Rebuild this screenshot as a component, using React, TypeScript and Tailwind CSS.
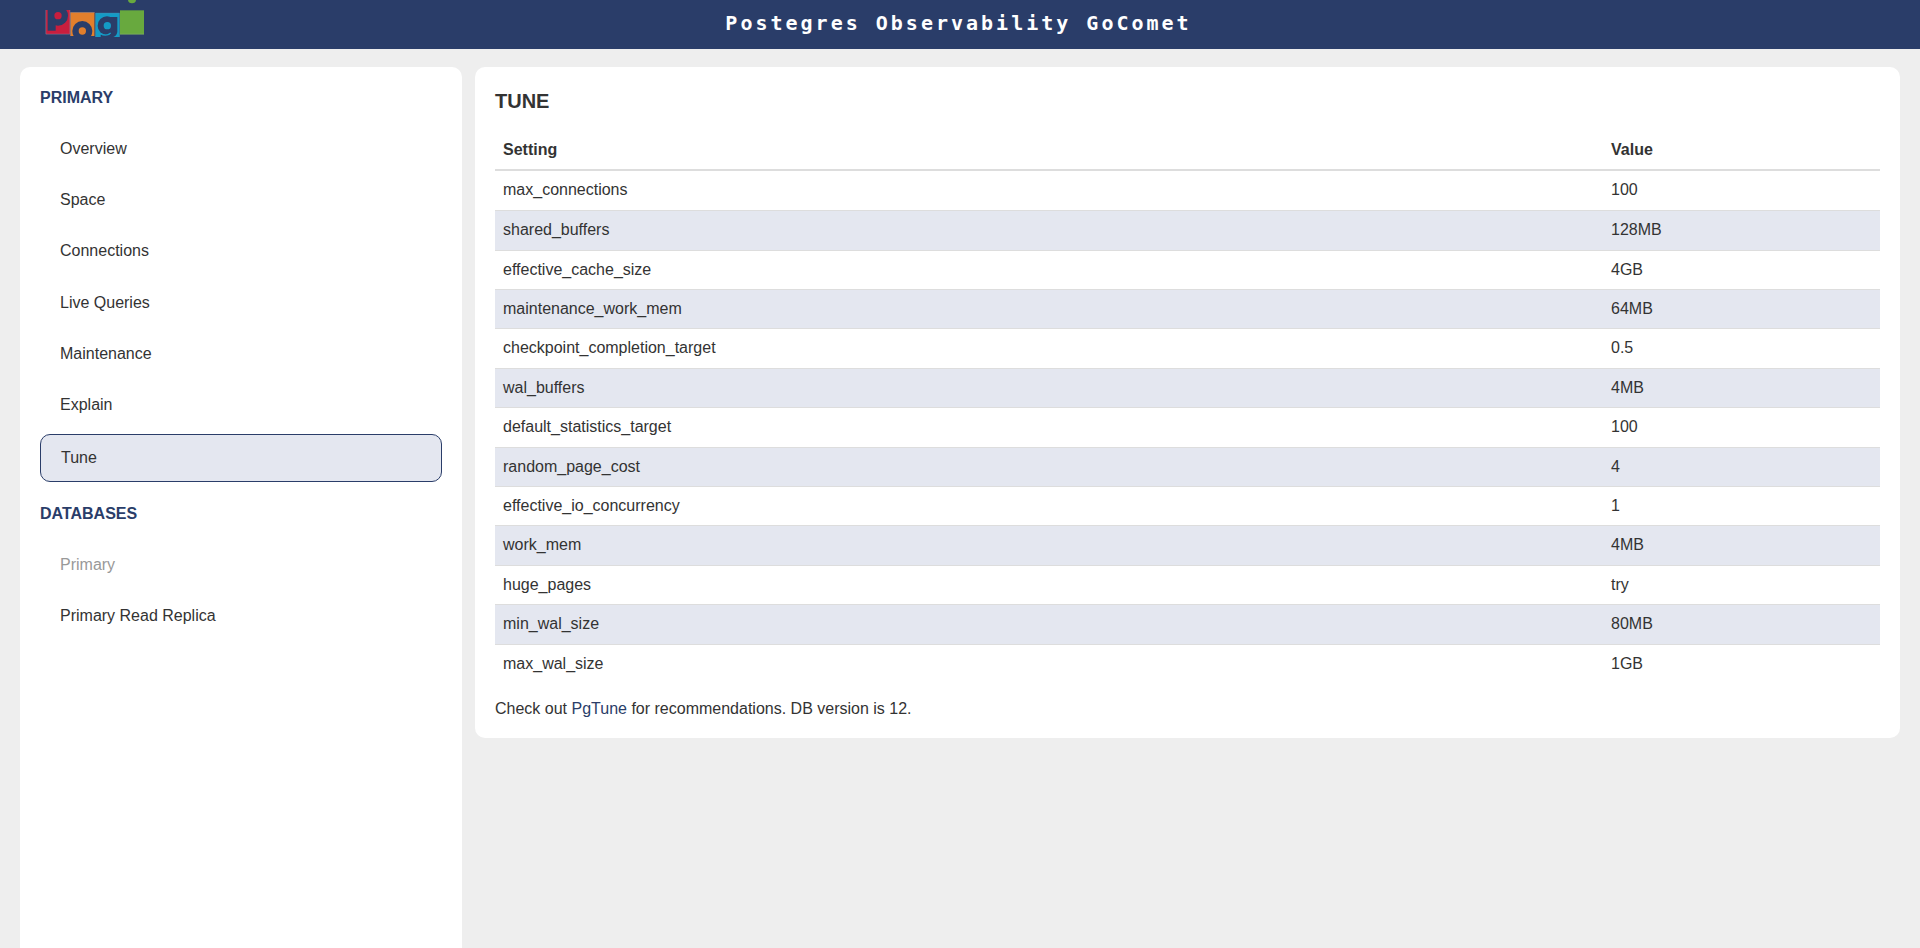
import React from "react";

const primaryLinks = [
  "Overview",
  "Space",
  "Connections",
  "Live Queries",
  "Maintenance",
  "Explain",
  "Tune",
];

const databases = ["Primary", "Primary Read Replica"];

const settings: [string, string][] = [
  ["max_connections", "100"],
  ["shared_buffers", "128MB"],
  ["effective_cache_size", "4GB"],
  ["maintenance_work_mem", "64MB"],
  ["checkpoint_completion_target", "0.5"],
  ["wal_buffers", "4MB"],
  ["default_statistics_target", "100"],
  ["random_page_cost", "4"],
  ["effective_io_concurrency", "1"],
  ["work_mem", "4MB"],
  ["huge_pages", "try"],
  ["min_wal_size", "80MB"],
  ["max_wal_size", "1GB"],
];

function Logo() {
  return (
    <svg viewBox="45 0 300 114" className="h-[38px] w-[100px]" role="img" aria-label="Pogi">
      <defs>
        <clipPath id="tile-red">
          <rect x="47" y="30" width="73" height="73" />
        </clipPath>
        <clipPath id="tile-orange">
          <rect x="121" y="37" width="73" height="71" />
        </clipPath>
        <clipPath id="tile-blue">
          <rect x="196" y="39" width="73" height="72" />
        </clipPath>
      </defs>
      <g clipPath="url(#tile-red)">
        <rect x="47" y="30" width="73" height="73" fill="#c81e3e" />
        <circle cx="84" cy="47" r="30" fill="#2a3d69" />
        <rect x="53" y="28" width="24" height="64" fill="#2a3d69" />
        <circle cx="84" cy="47" r="11" fill="#c81e3e" />
      </g>
      <path d="M47.5 30V102.5H119.5V30" fill="none" stroke="#8d7f9b" strokeWidth="1.5" />
      <g clipPath="url(#tile-orange)">
        <rect x="121" y="37" width="73" height="71" fill="#e27f2c" />
        <circle cx="157" cy="93" r="30" fill="#2a3d69" />
        <circle cx="157" cy="93" r="11" fill="#e27f2c" />
      </g>
      <path d="M121.5 108V37.5H194" fill="none" stroke="#a98f83" strokeWidth="1.5" />
      <g clipPath="url(#tile-blue)">
        <rect x="196" y="39" width="73" height="72" fill="#149bc6" />
        <circle cx="231" cy="77" r="28" fill="#2a3d69" />
        <path d="M240 51H262V96Q260 108 250 111H212V104H240Z" fill="#2a3d69" />
        <path d="M210 100Q228 111 242 99" fill="none" stroke="#149bc6" strokeWidth="4" />
        <circle cx="232" cy="77" r="11" fill="#149bc6" />
      </g>
      <path d="M196.5 111V39.5H268.5V111" fill="none" stroke="#4a8fae" strokeWidth="1.5" />
      <rect x="270" y="31" width="72" height="72" fill="#68a93e" />
      <path d="M270 102.5H342" stroke="#8fbb78" strokeWidth="1.5" />
      <circle cx="306" cy="-2" r="12" fill="#68a93e" />
    </svg>
  );
}

function NavItem({ label, active, muted }: { label: string; active?: boolean; muted?: boolean }) {
  return (
    <li className="mb-[5px] nth-[3n]:mb-1.5">
      <a
        href="#"
        aria-current={active ? "page" : undefined}
        className={
          "block rounded-[10px] px-5 py-3 " +
          (active ? "border border-[#2a3d69] bg-[#e4e7f0]" : muted ? "text-[#999999]" : "")
        }
      >
        {label}
      </a>
    </li>
  );
}

export default function App() {
  return (
    <div className="flex min-h-screen flex-col bg-[#eeeeee] font-['Liberation_Sans',Arial,sans-serif] text-base leading-[22px] text-[#333333]">
      <header className="grid h-[49px] grid-cols-[1fr_auto_1fr] items-start bg-[#2a3d69] pl-[45px] pr-12">
        <a href="#" className="block w-[100px]">
          <Logo />
        </a>
        <h1 className="self-center pb-1 font-['DejaVu_Sans_Mono',monospace] text-xl font-bold tracking-[3px] text-white">
          Postegres Observability GoComet
        </h1>
      </header>

      <div className="flex flex-1 items-stretch gap-[13px] px-5 pt-[18px]">
        <nav className="w-[442px] shrink-0 rounded-t-[10px] bg-white p-5">
          <h2 className="mb-[17px] font-bold text-[#2a3d69]">PRIMARY</h2>
          <ul className="mb-4 flex flex-col">
            {primaryLinks.map((label) => (
              <NavItem key={label} label={label} active={label === "Tune"} />
            ))}
          </ul>
          <h2 className="mb-[17px] font-bold text-[#2a3d69]">DATABASES</h2>
          <ul className="flex flex-col">
            {databases.map((label) => (
              <NavItem key={label} label={label} muted={label === "Primary"} />
            ))}
          </ul>
        </nav>

        <main className="min-w-0 flex-1 self-start rounded-[10px] bg-white px-5 pb-[18px] pt-5">
          <h2 className="mb-4 text-xl font-bold leading-7">TUNE</h2>
          <table className="mb-[15px] w-full table-fixed border-separate border-spacing-0 text-left">
            <thead>
              <tr>
                <th className="w-4/5 border-b-2 border-[#dddddd] p-2 font-bold">Setting</th>
                <th className="w-1/5 border-b-2 border-[#dddddd] p-2 font-bold">Value</th>
              </tr>
            </thead>
            <tbody>
              {settings.map(([name, value]) => (
                <tr
                  key={name}
                  className="h-[39px] align-top even:bg-[#e4e7f0] nth-[5n]:h-10 nth-[5n+2]:h-10 [&:not(:first-child)>td]:border-t"
                >
                  <td className="border-[#dddddd] px-2 pt-2">{name}</td>
                  <td className="border-[#dddddd] px-2 pt-2">{value}</td>
                </tr>
              ))}
            </tbody>
          </table>
          <p>
            Check out{" "}
            <a href="#" className="text-[#2a3d69]">
              PgTune
            </a>{" "}
            for recommendations. DB version is 12.
          </p>
        </main>
      </div>
    </div>
  );
}
